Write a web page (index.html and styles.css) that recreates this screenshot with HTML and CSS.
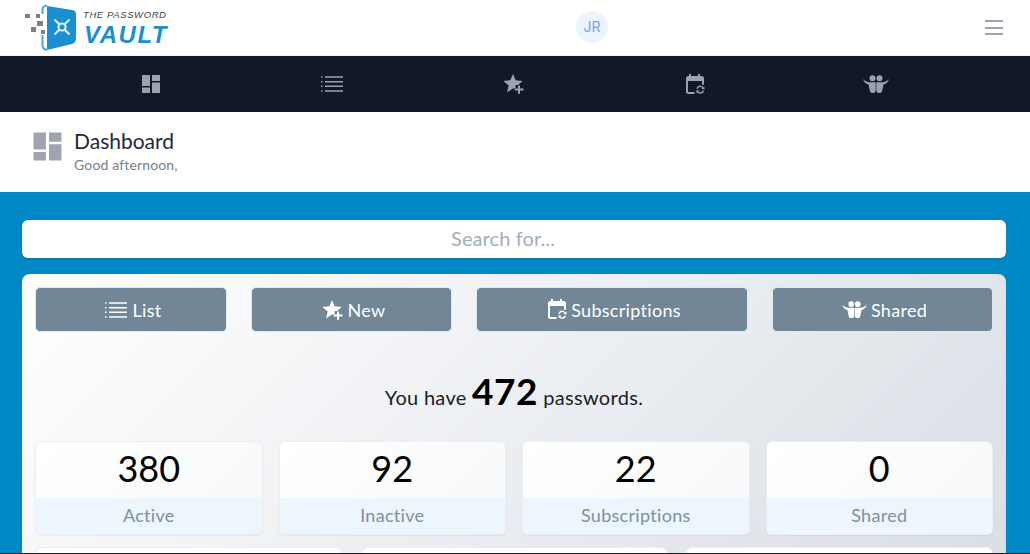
FILE: index.html
```html
<!DOCTYPE html>
<html lang="en">
<head>
<meta charset="utf-8">
<title>Dashboard</title>
<link rel="stylesheet" href="styles.css">
</head>
<body>
<svg class="defs" width="0" height="0" aria-hidden="true">
  <defs>
    <symbol id="i-dash" viewBox="0 0 20 20"><path d="M1 1h8v11H1zM11 1h8v6h-8zM1 13.500h8V19H1zM11 8.500h8V19h-8z"/></symbol>
    <symbol id="i-list" viewBox="0 0 24 20"><path d="M5 2.300h18v1.500H5zM5 7h18v1.500H5zM5 11.600h18v1.500H5zM5 16.300h18v1.500H5zM1 2.300h1.500v1.500H1zM1 7h1.500v1.500H1zM1 11.600h1.500v1.500H1zM1 16.300h1.500v1.500H1z"/></symbol>
    <symbol id="i-star" viewBox="0 0 22 20"><path d="M10 0l2.700 6.300 7 .6-4.700 4.100h-2.400v3.500H10l-6 3.900 1.700-7L.3 6.900l7-.6z"/><path d="M15 11.500h2v3h3.500v2H17v3.200h-2v-3.200h-3.200v-2H15z"/></symbol>
    <symbol id="i-cal" viewBox="0 0 20 21"><path fill-rule="evenodd" d="M4 0h2v2h7V0h2v2h1.500A2.500 2.500 0 0 1 19 4.500v6.300h-2V7H3v11h6.500v2H3.500A2.500 2.500 0 0 1 1 17.500v-13A2.500 2.500 0 0 1 3.500 2H4z"/><path d="M15 11.500a4 4 0 0 1 3.300 1.800l1-.8.300 3-3-.4 .9-.8a2.600 2.600 0 0 0-4.800.7l-1.300-.3A4 4 0 0 1 15 11.500zM11.300 16.200l3 .4-.9.800a2.600 2.600 0 0 0 4.400-.8l1.300.4a4 4 0 0 1-6.800 1.400l-.8.7z"/></symbol>
    <symbol id="i-share" viewBox="0 0 26 18"><circle cx="9.500" cy="3.300" r="3"/><circle cx="16.500" cy="3.300" r="3"/><path d="M0 4c1.500 1.700 3.500 2.800 6 3.200h6.700V15a3 3 0 0 1-3 3 3 3 0 0 1-3-3L5.500 9.500C3 9 .8 7 0 4zM26 4c-1.500 1.700-3.500 2.800-6 3.200h-6.700V15a3 3 0 0 0 3 3 3 3 0 0 0 3-3L20.500 9.500C23 9 25.200 7 26 4z"/></symbol>
  </defs>
</svg>

<header class="topbar">
  <div class="logo">
    <svg class="logo-mark" viewBox="0 0 56 56" width="56" height="56" aria-hidden="true">
      <g fill="#808080"><rect x="0" y="14" width="5" height="4"/><rect x="11" y="14" width="4" height="4"/><rect x="12" y="21" width="6" height="5"/><rect x="6" y="27" width="5" height="5"/><rect x="16" y="30" width="4" height="4"/></g>
      <path fill="#1a8fd1" d="M22 6l25 4q4 .5 4 4v24q0 5-4 6l-25 6z"/>
      <path fill="none" stroke="#3fa9e0" stroke-width="2" d="M22 5.500c-3 0-4.500 2-4.500 4v4.500M17.500 35v10c0 3 2 4.500 4.500 5"/>
      <g stroke="#e4f3fb" stroke-width="2" fill="none"><circle cx="37" cy="27" r="3.600"/><path d="M29.500 19.500l5 5M44.500 19.500l-5 5M29.500 34.500l5-5M44.500 34.500l-5-5"/></g>
    </svg>
    <div class="logo-text">
      <span class="logo-small">THE PASSWORD</span>
      <span class="logo-big">VAULT</span>
    </div>
  </div>
  <div class="avatar">JR</div>
  <button class="burger" type="button" aria-label="Menu"><span></span><span></span><span></span></button>
</header>

<nav class="iconnav">
  <a class="iconnav-item"><svg width="20" height="20"><use href="#i-dash"/></svg></a>
  <a class="iconnav-item"><svg width="24" height="20"><use href="#i-list"/></svg></a>
  <a class="iconnav-item"><svg width="22" height="20"><use href="#i-star"/></svg></a>
  <a class="iconnav-item"><svg width="20" height="21"><use href="#i-cal"/></svg></a>
  <a class="iconnav-item"><svg width="26" height="18"><use href="#i-share"/></svg></a>
</nav>

<section class="pagehead">
  <svg class="pagehead-icon" width="31" height="31"><use href="#i-dash"/></svg>
  <div>
    <h1 class="pagehead-title">Dashboard</h1>
    <p class="pagehead-sub">Good afternoon,</p>
  </div>
</section>

<main class="main">
  <div class="search">Search for...</div>
  <section class="panel">
    <div class="actions">
      <a class="btn"><svg width="24" height="20"><use href="#i-list"/></svg>List</a>
      <a class="btn"><svg width="22" height="20"><use href="#i-star"/></svg>New</a>
      <a class="btn"><svg width="20" height="21"><use href="#i-cal"/></svg>Subscriptions</a>
      <a class="btn"><svg width="25" height="17"><use href="#i-share"/></svg>Shared</a>
    </div>
    <p class="summary">You have <strong>472</strong> passwords.</p>
    <div class="stats">
      <div class="stat"><div class="stat-num">380</div><div class="stat-label">Active</div></div>
      <div class="stat"><div class="stat-num">92</div><div class="stat-label">Inactive</div></div>
      <div class="stat"><div class="stat-num">22</div><div class="stat-label">Subscriptions</div></div>
      <div class="stat"><div class="stat-num">0</div><div class="stat-label">Shared</div></div>
    </div>
    <div class="row3">
      <div class="card"></div>
      <div class="card"></div>
      <div class="card"></div>
    </div>
  </section>
</main>
<div class="edge"></div>
</body>
</html>
```
FILE: styles.css
```css
* { box-sizing: border-box; }
html, body { margin: 0; height: 554px; overflow: hidden; }
body { font-family: "Lato", "Open Sans", sans-serif; background: #0088c6; color: #1a202c; }
.defs { display: block; height: 0; }
svg { fill: currentColor; display: block; flex: none; }

.topbar { height: 56px; background: #fff; border-bottom: 1px solid #f1f4f8; display: grid; grid-template-columns: 551px 32px 1fr; padding: 0 27px 0 25px; }
.logo { display: flex; align-items: flex-start; height: 55px; }
.logo-mark { margin-right: 2px; }
.logo-text { display: flex; flex-direction: column; margin-top: 10px; }
.logo-small { font: italic 400 9.5px/10px "Liberation Sans", sans-serif; color: #444; letter-spacing: .6px; }
.logo-big { font: italic 700 24px/24px "Liberation Sans", sans-serif; color: #1a8fd1; letter-spacing: 1.500px; margin: 3px 0 0 1px; }
.avatar { width: 32px; height: 32px; margin-top: 11px; border-radius: 50%; background: #ebf4ff; color: #7f9cf5; font: 400 14px/32px "Inter", sans-serif; text-align: center; }
.burger { justify-self: end; margin-top: 20px; width: 18px; height: 15px; padding: 0; border: 0; background: none; display: flex; flex-direction: column; justify-content: space-between; }
.burger span { display: block; height: 2px; background: #a0a4b0; }

.iconnav { height: 56px; background: #111827; color: #9ca3af; display: flex; padding: 0 63px 0 60px; }
.iconnav-item { flex: 1; display: flex; align-items: center; justify-content: center; }

.pagehead { height: 80px; background: #fff; display: flex; align-items: flex-start; padding: 19px 0 0 32px; gap: 11px; }
.pagehead-icon { color: #a0a4b0; }
.pagehead-title { margin: -2px 0 0; font-size: 21px; font-weight: 400; line-height: 24px; color: #1f2937; }
.pagehead-sub { margin: 3px 0 0; font-size: 14px; line-height: 18px; letter-spacing: .15px; color: #718096; }

.main { height: 361px; overflow: hidden; padding: 28px 24px 0 22px; }
.search { height: 38px; padding-right: 22px; background: #fff; border-radius: 6px; text-align: center; font-size: 20px; letter-spacing: .1px; line-height: 36px; color: #a0aec0; box-shadow: 0 1px 3px rgba(0,0,0,.15); }
.panel { margin-top: 16px; height: 300px; border-radius: 8px; background: linear-gradient(135deg, #fff 0%, #d9dee5 100%); padding: 13px 13px 0; }

.actions { display: grid; grid-template-columns: 192px 201px 272px 221px; column-gap: 24px; }
.btn { height: 45px; padding-left: 4px; background: #718696; border: 1px solid #e2e8f0; border-radius: 5px; color: #fff; font-size: 18px; letter-spacing: .3px; display: flex; align-items: center; justify-content: center; gap: 4px; }

.summary { margin: 36px 0 0; text-align: center; font-size: 20px; letter-spacing: .3px; line-height: 46px; height: 46px; color: #1a202c; }
.summary strong { font-size: 37px; font-weight: 700; letter-spacing: .5px; color: #000; }

.stats { margin-top: 27px; display: grid; grid-template-columns: repeat(4, 1fr); column-gap: 16px; }
.stat { height: 94px; border-radius: 6px; overflow: hidden; background: linear-gradient(135deg, #fff, #f7f8f9); border: 1px solid #eceef1; box-shadow: 0 1px 2px rgba(0,0,0,.06); display: flex; flex-direction: column; }
.stat-num { height: 56px; text-align: center; font-size: 36px; line-height: 52px; color: #000; }
.stat-label { flex: 1; background: #edf5fd; text-align: center; font-size: 18px; letter-spacing: .3px; line-height: 34px; color: #7e90a3; }

.row3 { margin-top: 12px; display: grid; grid-template-columns: repeat(3, 1fr); column-gap: 19px; }
.card { height: 60px; background: #fff; border-radius: 6px; border: 1px solid #eceef1; }

.edge { height: 1px; background: #1f1f24; }
```
